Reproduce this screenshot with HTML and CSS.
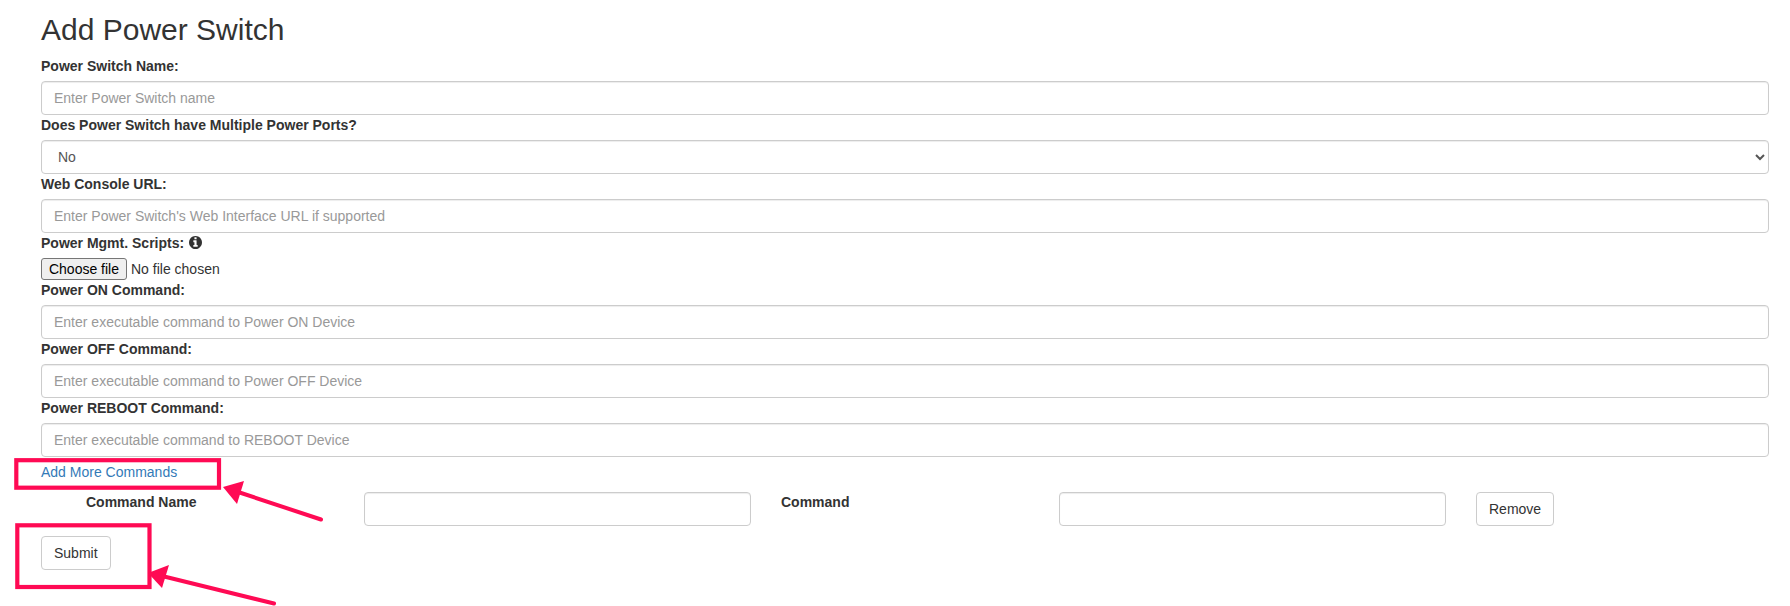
FILE: index.html
```html
<!DOCTYPE html>
<html lang="en">
<head>
<meta charset="utf-8">
<title>Add Power Switch</title>
<link rel="stylesheet" href="styles.css">
</head>
<body>
<main class="page">
  <h2 class="title">Add Power Switch</h2>
  <form class="form">
    <label class="label" for="name">Power Switch Name:</label>
    <input class="control" id="name" type="text" placeholder="Enter Power Switch name">
    <label class="label" for="multi">Does Power Switch have Multiple Power Ports?</label>
    <select class="control" id="multi"><option>No</option><option>Yes</option></select>
    <label class="label" for="url">Web Console URL:</label>
    <input class="control" id="url" type="text" placeholder="Enter Power Switch's Web Interface URL if supported">
    <label class="label" for="choose">Power Mgmt. Scripts: <svg class="info" viewBox="0 0 1536 1536" aria-hidden="true"><path fill-rule="evenodd" d="M1024 1248v-160q0-14-9-23t-23-9h-96v-512q0-14-9-23t-23-9h-320q-14 0-23 9t-9 23v160q0 14 9 23t23 9h96v320h-96q-14 0-23 9t-9 23v160q0 14 9 23t23 9h448q14 0 23-9t9-23zm-128-896v-160q0-14-9-23t-23-9h-192q-14 0-23 9t-9 23v160q0 14 9 23t23 9h192q14 0 23-9t9-23zm640 416q0 209-103 385.5t-279.5 279.5-385.5 103-385.5-103-279.5-279.5-103-385.5 103-385.5 279.5-279.5 385.5-103 385.5 103 279.5 279.5 103 385.5z"/></svg></label>
    <div class="file">
      <button class="file-button" id="choose" type="button">Choose file</button>
      <span class="file-name">No file chosen</span>
    </div>
    <label class="label" for="on">Power ON Command:</label>
    <input class="control" id="on" type="text" placeholder="Enter executable command to Power ON Device">
    <label class="label" for="off">Power OFF Command:</label>
    <input class="control" id="off" type="text" placeholder="Enter executable command to Power OFF Device">
    <label class="label" for="reboot">Power REBOOT Command:</label>
    <input class="control" id="reboot" type="text" placeholder="Enter executable command to REBOOT Device">
    <a class="more" href="#">Add More Commands</a>
    <div class="command-row">
      <label class="label cell" for="cname">Command Name</label>
      <div class="cell"><input class="control" id="cname" type="text"></div>
      <label class="label cell" for="ccmd">Command</label>
      <div class="cell"><input class="control" id="ccmd" type="text"></div>
      <div class="cell"><button class="btn" type="button">Remove</button></div>
    </div>
    <button class="btn" type="submit">Submit</button>
  </form>
</main>
<svg class="marks" viewBox="0 0 1790 606" aria-hidden="true">
  <rect class="mark-box" x="16.3" y="460.2" width="202.7" height="27.5"/>
  <rect class="mark-box" x="17.3" y="525.3" width="132.2" height="61.7"/>
  <line class="mark-line" x1="321" y1="519.5" x2="232" y2="490"/>
  <polygon class="mark-head" points="223,487 244,481 237,504"/>
  <line class="mark-line" x1="274" y1="603.5" x2="158" y2="575"/>
  <polygon class="mark-head" points="148,573 169,565 162,588"/>
</svg>
</body>
</html>
```

FILE: styles.css
```css
* {
  box-sizing: border-box;
}

html, body {
  margin: 0;
  height: 606px;
  overflow: hidden;
  background: #fff;
}

body {
  position: relative;
  font-family: "Liberation Sans", Arial, sans-serif;
  font-size: 14px;
  line-height: 20px;
  color: #333;
}

.page {
  padding: 13px 21px 0 41px;
}

.title {
  margin: 0 0 10px;
  font-size: 30px;
  font-weight: 500;
  line-height: 33px;
}

.form {
  display: block;
}

.label {
  display: block;
  margin-bottom: 5px;
  font-weight: 700;
}

.info {
  display: inline-block;
  width: 13px;
  height: 13px;
  margin-left: 1px;
  vertical-align: -0.5px;
  fill: #333;
}

.control {
  display: block;
  width: 100%;
  height: 34px;
  padding: 6px 12px;
  font: inherit;
  color: #555;
  background: #fff;
  border: 1px solid #ccc;
  border-radius: 4px;
  box-shadow: inset 0 1px 1px rgba(0, 0, 0, .075);
}

.control::placeholder {
  color: #999;
  opacity: 1;
}

.file {
  display: flex;
  align-items: center;
  gap: 4px;
  height: 22px;
}

.file-button {
  width: 86px;
  height: 22px;
  padding: 0;
  font: inherit;
  line-height: 20px;
  color: #000;
  background: #efefef;
  border: 1px solid #767676;
  border-radius: 3px;
}

.file-name {
  color: #333;
}

.more {
  display: block;
  margin-top: 5px;
  color: #337ab7;
  text-decoration: none;
}

.command-row {
  display: grid;
  grid-template-columns: 278px 417px 278px 417px 278px;
  margin: 10px 0 10px 30px;
}

.cell {
  padding: 0 15px;
}

.btn {
  height: 34px;
  padding: 6px 12px;
  font: inherit;
  color: #333;
  background: #fff;
  border: 1px solid #ccc;
  border-radius: 4px;
}

.marks {
  position: absolute;
  top: 0;
  left: 0;
  width: 1790px;
  height: 606px;
  pointer-events: none;
}

.mark-box {
  fill: none;
  stroke: #ff0a54;
  stroke-width: 4.2;
}

.mark-line {
  stroke: #ff0a54;
  stroke-width: 4;
  stroke-linecap: round;
}

.mark-head {
  fill: #ff0a54;
}
```
